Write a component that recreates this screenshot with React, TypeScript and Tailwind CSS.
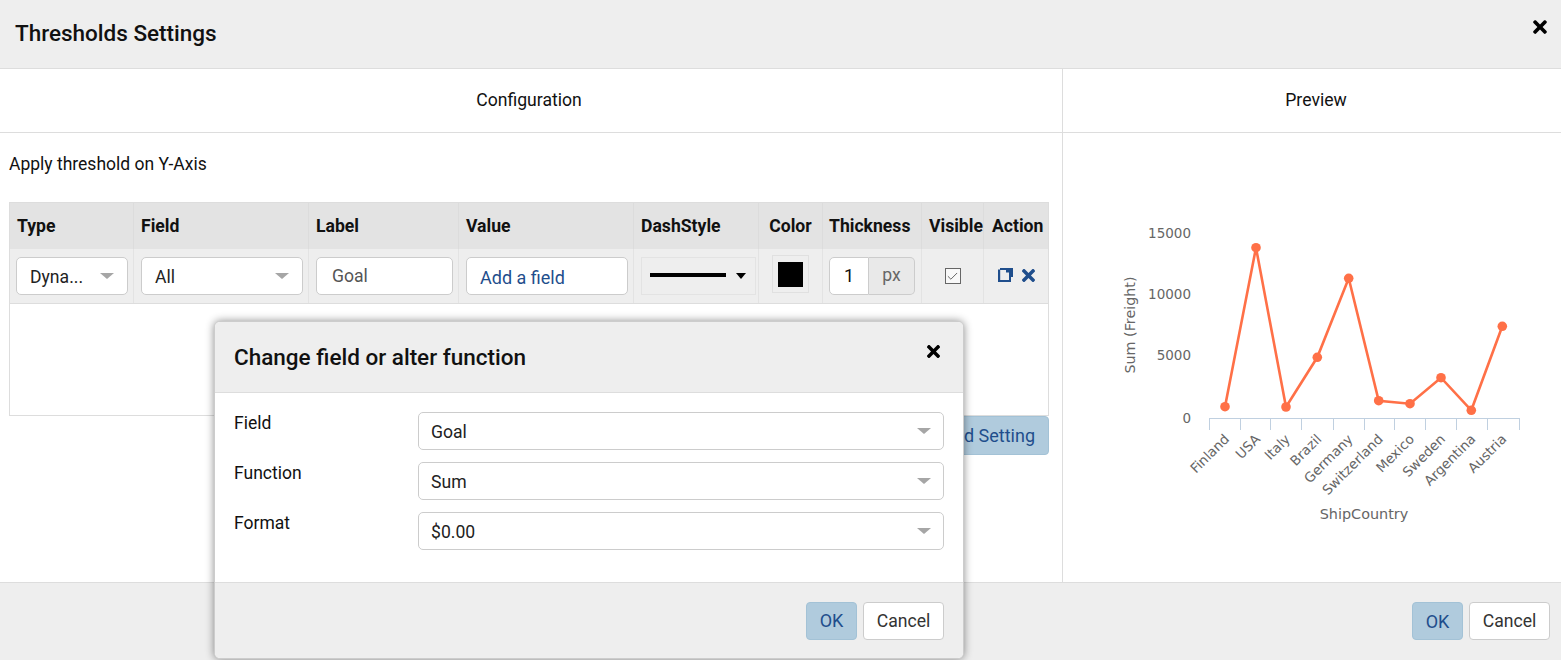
import * as React from "react";
import { FaTimes } from "react-icons/fa";
import { LuCheck } from "react-icons/lu";

const countries = [
  { name: "Finland", x: 1225, y: 406.7 },
  { name: "USA", x: 1256, y: 247.7 },
  { name: "Italy", x: 1286, y: 407 },
  { name: "Brazil", x: 1317.3, y: 357.3 },
  { name: "Germany", x: 1348.7, y: 278.3 },
  { name: "Switzerland", x: 1378.7, y: 400.7 },
  { name: "Mexico", x: 1410, y: 403.7 },
  { name: "Sweden", x: 1441, y: 377.7 },
  { name: "Argentina", x: 1471.3, y: 410.3 },
  { name: "Austria", x: 1502.3, y: 326.3 },
];
const ticks = [1209.5, 1240.5, 1270.5, 1301.5, 1333.5, 1364.5, 1394.5, 1425.5, 1456.5, 1487.5, 1519.5];

function Caret() {
  return <span className="w-0 h-0 border-x-[7px] border-x-transparent border-t-[6px] border-t-[#a6a6a6]" />;
}

function Select({ value, className }: { value: string; className?: string }) {
  return (
    <div className={`flex items-center justify-between h-[38px] bg-white border border-[#ccc] rounded-[5px] text-[17.6px] text-[#222] ${className ?? ""}`}>
      <span className="pt-[2px]">{value}</span>
      <Caret />
    </div>
  );
}

function HeadCell({ label, className }: { label: string; className: string }) {
  return (
    <div className={`flex items-center border-r border-[#dcdcdc] font-bold text-[17.6px] text-[#111] whitespace-nowrap ${className}`}>
      {label}
    </div>
  );
}

function CopyIcon() {
  return (
    <svg width="15" height="14" viewBox="0 0 15 14" className="shrink-0">
      <path
        fillRule="evenodd"
        fill="#1f4e8c"
        d="M2 0H15V9H13V14H0V1.5H2ZM2.2 2V12H11V4.5H8V2Z"
      />
    </svg>
  );
}

function Chart() {
  const ox = 1063;
  const oy = 133;
  return (
    <svg width="498" height="449" viewBox={`${ox} ${oy} 498 449`} className="block">
      <g fontFamily="'DejaVu Sans', sans-serif" fontSize="13.5" fill="#666">
        <text x="1191" y="238" textAnchor="end">15000</text>
        <text x="1191" y="299" textAnchor="end">10000</text>
        <text x="1191" y="360" textAnchor="end">5000</text>
        <text x="1191" y="423" textAnchor="end">0</text>
        <text x="1135" y="325" textAnchor="middle" transform="rotate(-90 1135 325)" fontSize="14.3">Sum (Freight)</text>
        <text x="1364" y="519" textAnchor="middle" fontSize="14.4">ShipCountry</text>
        {countries.map((c) => (
          <text key={c.name} x={c.x + 5} y={440} textAnchor="end" transform={`rotate(-45 ${c.x + 5} 440)`}>
            {c.name}
          </text>
        ))}
      </g>
      <path d="M1209.5 418.5H1519.5" stroke="#c0d0e0" fill="none" />
      {ticks.map((t) => (
        <path key={t} d={`M${t} 418V430`} stroke="#c0d0e0" fill="none" />
      ))}
      <polyline
        points={countries.map((c) => `${c.x},${c.y}`).join(" ")}
        fill="none"
        stroke="#ff7047"
        strokeWidth="2.6"
      />
      {countries.map((c) => (
        <circle key={c.name} cx={c.x} cy={c.y} r="4.8" fill="#ff7047" />
      ))}
    </svg>
  );
}

export default function App() {
  return (
    <div className="relative w-[1561px] h-[660px] overflow-hidden bg-white font-['Roboto',sans-serif] text-[#111]">
      <div className="flex items-center justify-between h-[69px] bg-[#eee] border-b border-[#ddd] pl-[15px] pr-[11px]">
        <h1 className="text-[22.5px] font-medium leading-none -mt-[1px]">Thresholds Settings</h1>
        <FaTimes className="text-[20px] text-black -mt-[14px]" />
      </div>

      <div className="flex h-[514px] border-b border-[#ddd]">
        <div className="w-[1063px] border-r border-[#ddd] flex flex-col">
          <div className="h-[64px] flex items-center justify-center border-b border-[#ddd] text-[17.6px] pr-[4px] shrink-0">
            Configuration
          </div>
          <div className="pl-[9px] pr-[13px] pt-[19px]">
            <p className="text-[17.5px] leading-[24px] h-[50px]">Apply threshold on Y-Axis</p>
            <div className="border border-[#ddd] h-[214px]">
              <div className="flex h-[46px] bg-[#e3e3e3]">
                <HeadCell label="Type" className="w-[124px] px-[7px]" />
                <HeadCell label="Field" className="w-[175px] px-[7px]" />
                <HeadCell label="Label" className="w-[150px] px-[7px]" />
                <HeadCell label="Value" className="w-[175px] pl-[7px]" />
                <HeadCell label="DashStyle" className="w-[125px] pl-[7px]" />
                <HeadCell label="Color" className="w-[64px] justify-center" />
                <HeadCell label="Thickness" className="w-[99px] pl-[6px]" />
                <HeadCell label="Visible" className="w-[62px] pl-[7px]" />
                <div className="flex-1 flex items-center pl-[8px] font-bold text-[17.6px]">Action</div>
              </div>
              <div className="flex h-[55px] bg-[#eee] border-b border-[#ddd]">
                <div className="w-[124px] flex items-center pl-[6px] pr-[5px] border-r border-[#e3e3e3]">
                  <Select value="Dyna..." className="w-full pl-[13px] pr-[13px]" />
                </div>
                <div className="w-[175px] flex items-center pl-[7px] pr-[5px] border-r border-[#e3e3e3]">
                  <Select value="All" className="w-full pl-[13px] pr-[13px]" />
                </div>
                <div className="w-[150px] flex items-center pl-[7px] pr-[5px] border-r border-[#e3e3e3]">
                  <div className="w-full h-[38px] flex items-center bg-white border border-[#ccc] rounded-[5px] pl-[15px] text-[17.6px] text-[#555]">
                    Goal
                  </div>
                </div>
                <div className="w-[175px] flex items-center pl-[7px] pr-[5px] border-r border-[#e3e3e3]">
                  <div className="w-full h-[38px] flex items-center bg-white border border-[#ccc] rounded-[5px] pl-[13px] text-[18px] text-[#1f4e8c] pt-[2px]">
                    Add a field
                  </div>
                </div>
                <div className="w-[125px] flex items-center pl-[7px] pr-[2px] border-r border-[#e3e3e3]">
                  <div className="w-full h-[38px] flex items-center justify-between border border-[#e3e3e3] pl-[8px] pr-[9px]">
                    <span className="w-[76px] h-[4px] bg-black -mt-[3px]" />
                    <span className="w-0 h-0 border-x-[5px] border-x-transparent border-t-[6px] border-t-black" />
                  </div>
                </div>
                <div className="w-[64px] flex items-center justify-center border-r border-[#e3e3e3] pb-[4px]">
                  <div className="w-[37px] h-[38px] border border-[#e0e0e0] flex items-center justify-center">
                    <span className="w-[25px] h-[25px] bg-black" />
                  </div>
                </div>
                <div className="w-[99px] flex items-center pl-[6px] border-r border-[#e3e3e3]">
                  <div className="w-[40px] h-[38px] flex items-center justify-center bg-white border border-[#ccc] rounded-l-[5px] text-[18px] pb-[2px]">1</div>
                  <div className="w-[46px] h-[38px] flex items-center justify-center bg-[#e9e9e9] border border-l-0 border-[#ccc] rounded-r-[5px] text-[17.6px] text-[#666] pb-[2px]">px</div>
                </div>
                <div className="w-[62px] flex items-center justify-center border-r border-[#e3e3e3]">
                  <div className="w-[16px] h-[16px] border border-[#666] bg-[#f8f8f8] flex items-center justify-center">
                    <LuCheck className="text-[13px] text-[#444]" strokeWidth={1.5} />
                  </div>
                </div>
                <div className="flex-1 flex items-center pl-[14px] gap-[6px] pb-[2px]">
                  <CopyIcon />
                  <FaTimes className="text-[19px] text-[#1f4e8c] shrink-0" />
                </div>
              </div>
            </div>
            <div className="flex justify-end">
              <button className="h-[39px] px-[13px] bg-[#b0cbdd] border border-[#a3c2d6] rounded-[4px] text-[18px] text-[#1f4e8c]">
                Add Setting
              </button>
            </div>
          </div>
        </div>
        <div className="flex-1 flex flex-col">
          <div className="h-[64px] flex items-center justify-center border-b border-[#ddd] text-[17.6px] pl-[8px] shrink-0">
            Preview
          </div>
          <Chart />
        </div>
      </div>

      <div className="flex items-center justify-end gap-[6px] h-[77px] bg-[#eee] pr-[11px] pb-[1px]">
        <button className="w-[51px] h-[38px] bg-[#b0cbdd] border border-[#a3c2d6] rounded-[4px] text-[18px] text-[#1f4e8c]">OK</button>
        <button className="w-[81px] h-[38px] pt-[1px] bg-white border border-[#ccc] rounded-[4px] text-[17.6px] text-[#333]">Cancel</button>
      </div>

      <div className="absolute left-[214px] top-[321px] w-[750px] h-[338px] flex flex-col bg-white border border-[#ccc] rounded-[6px] overflow-hidden shadow-[0_0_8px_rgba(0,0,0,0.45)]">
        <div className="flex items-center justify-between h-[71px] shrink-0 bg-[#eee] border-b border-[#ddd] pl-[19px] pr-[20px]">
          <h2 className="text-[22.5px] font-medium pt-[2px]">Change field or alter function</h2>
          <FaTimes className="text-[19px] text-black -mt-[12px]" />
        </div>
        <div className="flex-1 pt-[19px] pl-[19px] pr-[19px] flex flex-col gap-[12px]">
          {[
            { label: "Field", value: "Goal" },
            { label: "Function", value: "Sum" },
            { label: "Format", value: "$0.00" },
          ].map((row) => (
            <div key={row.label} className="flex h-[38px]">
              <span className="w-[184px] text-[17.5px] leading-[22px]">{row.label}</span>
              <Select value={row.value} className="flex-1 pl-[12px] pr-[12px]" />
            </div>
          ))}
        </div>
        <div className="flex items-center justify-end gap-[6px] h-[76px] shrink-0 bg-[#eee] border-t border-[#ddd] pr-[19px]">
          <button className="w-[51px] h-[38px] bg-[#b0cbdd] border border-[#a3c2d6] rounded-[4px] text-[18px] text-[#1f4e8c]">OK</button>
          <button className="w-[81px] h-[38px] pt-[1px] bg-white border border-[#ccc] rounded-[4px] text-[17.6px] text-[#333]">Cancel</button>
        </div>
      </div>
    </div>
  );
}
